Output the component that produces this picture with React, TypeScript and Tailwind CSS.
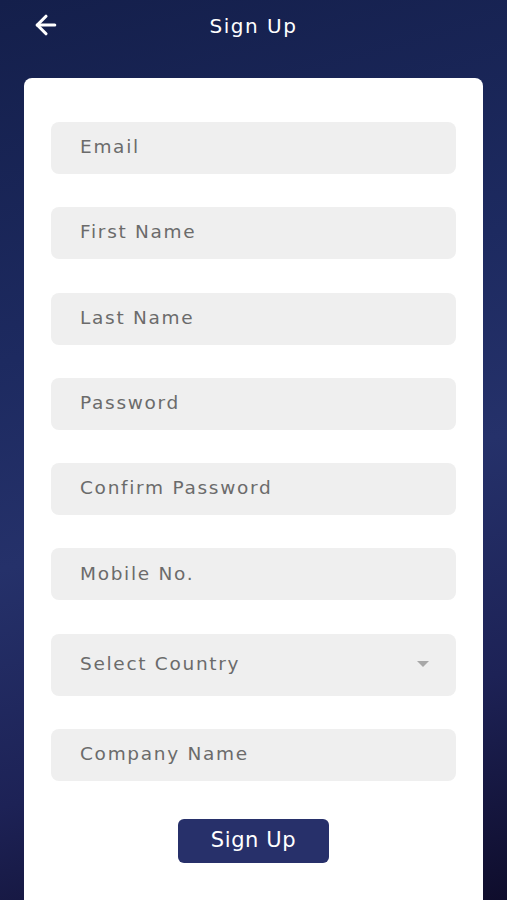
import { ArrowLeft } from 'lucide-react';

const fields = ['Email', 'First Name', 'Last Name', 'Password', 'Confirm Password', 'Mobile No.'];

const Field = ({ label }: { label: string }) => (
  <div className="h-[52px] rounded-lg bg-[#efefef] pl-[29px] pb-[2px] flex items-center text-[18.5px] text-[#6b6b6b] tracking-[1.7px]">
    {label}
  </div>
);

const App = () => {
  return (
    <div
      className="w-[507px] h-[900px] overflow-hidden bg-[linear-gradient(165deg,#141f4b_0%,#1d2a60_35%,#25316a_55%,#1d2256_78%,#0f0d2c_100%)]"
      style={{ fontFamily: '"DejaVu Sans", "Liberation Sans", sans-serif' }}
    >
      <header className="h-[52px] relative flex items-center justify-center text-white">
        <button className="absolute left-[31px] top-[10px]">
          <ArrowLeft size={30} strokeWidth={2.5} />
        </button>
        <h1 className="text-[20px] tracking-[1.5px]">Sign Up</h1>
      </header>

      <div className="mx-[24px] mt-[26px] bg-white rounded-lg h-[900px] px-[27px] pt-[44px]">
        <div className="flex flex-col gap-[33.3px]">
          {fields.map((f) => (
            <Field key={f} label={f} />
          ))}
          <div className="h-[62px] rounded-lg bg-[#efefef] pl-[29px] pr-[27px] pb-[2px] flex items-center justify-between text-[18.5px] text-[#6b6b6b] tracking-[1.7px]">
            <span>Select Country</span>
            <svg width="12" height="6" viewBox="0 0 12 6">
              <path d="M0 0 L12 0 L6 6 Z" fill="#a8a8a8" />
            </svg>
          </div>
          <Field label="Company Name" />
        </div>
        <div className="flex justify-center mt-[38px]">
          <button className="w-[151px] h-[44px] rounded-md bg-[#27306a] text-white text-[21px] tracking-[0.6px]">
            Sign Up
          </button>
        </div>
      </div>
    </div>
  );
};

export default App;
